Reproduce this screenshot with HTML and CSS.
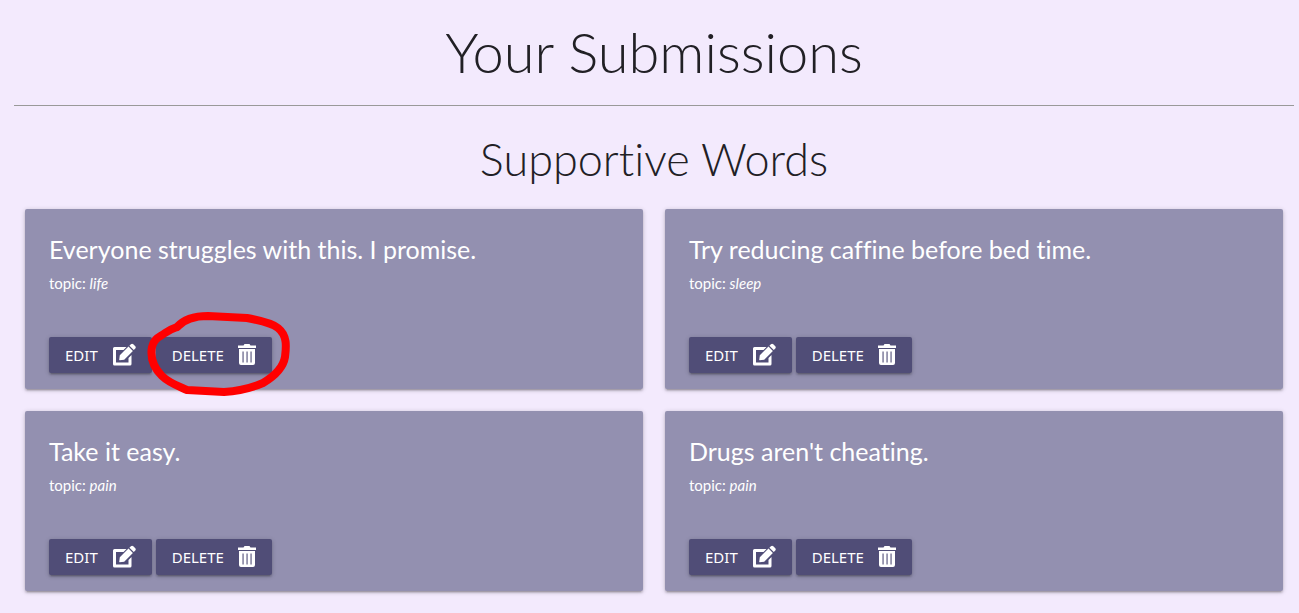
FILE: index.html
```html
<!DOCTYPE html>
<html lang="en">
<head>
<meta charset="utf-8">
<meta name="viewport" content="width=device-width, initial-scale=1">
<title>Your Submissions</title>
<link rel="stylesheet" href="styles.css">
</head>
<body>
<svg class="sprite" aria-hidden="true">
  <symbol id="edit" viewBox="0 0 24 24">
    <path fill-rule="evenodd" d="M2.500 4H14.500L11.500 7H4V19.500H16.500V15L19.500 12V21Q19.500 22.500 18 22.500H2.500Q1 22.500 1 21V5.500Q1 4 2.500 4Z"/>
    <path d="M7.200 16.800L7.800 12.300L16.500 3.600L20.900 8L12.200 16.700L7.600 17.300ZM17.400 2.700L18.900 1.200Q20.100.3 21.300 1.200L23.300 3.200Q24.200 4.400 23.300 5.600L21.800 7.100Z"/>
  </symbol>
  <symbol id="trash" viewBox="3 0 18 24">
    <path d="M3 2.500H8.500L9.500 1H14.500L15.500 2.500H21V5H3Z"/>
    <path fill-rule="evenodd" d="M4 6H20V20Q20 22 18 22H6Q4 22 4 20ZM7.500 8.500V19.500H8.600V8.500ZM11.500 8.500V19.500H12.600V8.500ZM15.500 8.500V19.500H16.600V8.500Z"/>
  </symbol>
</svg>
<main class="page">
  <h1 class="page-title">Your Submissions</h1>
  <hr class="divider">
  <h2 class="section-title">Supportive Words</h2>
  <section class="cards">
    <article class="card">
      <h3 class="card-title">Everyone struggles with this. I promise.</h3>
      <p class="topic">topic: <em>life</em></p>
      <div class="actions">
        <button class="btn" type="button">EDIT<svg class="icon" aria-hidden="true"><use href="#edit"/></svg></button>
        <div class="marked">
          <button class="btn" type="button">DELETE<svg class="icon icon-trash" aria-hidden="true"><use href="#trash"/></svg></button>
          <svg class="scribble" viewBox="146 310 146 88" aria-hidden="true"><path d="M177 327C185 318 197 316 208 316L247 318C258 320 272 323 278 328C288 336 286 348 285 357C283 369 273 377 263 383C249 389 238 391 224 392L187 390C178 386 169 383 162 376C153 367 150 358 152 347C154 338 160 337 165 333Q171 329 177 327"/></svg>
        </div>
      </div>
    </article>
    <article class="card">
      <h3 class="card-title">Try reducing caffine before bed time.</h3>
      <p class="topic">topic: <em>sleep</em></p>
      <div class="actions">
        <button class="btn" type="button">EDIT<svg class="icon" aria-hidden="true"><use href="#edit"/></svg></button>
        <button class="btn" type="button">DELETE<svg class="icon icon-trash" aria-hidden="true"><use href="#trash"/></svg></button>
      </div>
    </article>
    <article class="card">
      <h3 class="card-title">Take it easy.</h3>
      <p class="topic">topic: <em>pain</em></p>
      <div class="actions">
        <button class="btn" type="button">EDIT<svg class="icon" aria-hidden="true"><use href="#edit"/></svg></button>
        <button class="btn" type="button">DELETE<svg class="icon icon-trash" aria-hidden="true"><use href="#trash"/></svg></button>
      </div>
    </article>
    <article class="card">
      <h3 class="card-title">Drugs aren't cheating.</h3>
      <p class="topic">topic: <em>pain</em></p>
      <div class="actions">
        <button class="btn" type="button">EDIT<svg class="icon" aria-hidden="true"><use href="#edit"/></svg></button>
        <button class="btn" type="button">DELETE<svg class="icon icon-trash" aria-hidden="true"><use href="#trash"/></svg></button>
      </div>
    </article>
  </section>
</main>
</body>
</html>
```
FILE: styles.css
```css
* {
  box-sizing: border-box;
}

body {
  margin: 0;
  background: #f3eafd;
  color: #212025;
  font-family: Lato, "Open Sans", sans-serif;
  font-variant-ligatures: none;
}

.sprite {
  display: none;
}

.page {
  padding: 18px 5px 22px 14px;
}

.page-title,
.section-title {
  margin: 0;
  font-weight: 300;
  text-align: center;
}

.page-title {
  font-size: 56px;
  line-height: 68px;
}

.divider {
  margin: 19px 0 23px;
  border: 0;
  border-top: 1px solid #999;
}

.section-title {
  font-size: 45px;
  line-height: 60px;
}

.cards {
  display: grid;
  grid-template-columns: 1fr 1fr;
  gap: 22px;
  padding: 20px 11px 0;
}

.card {
  padding: 24px 24px 16px;
  border-radius: 2px;
  background: #9390b0;
  color: #fff;
  box-shadow: 0 2px 2px rgba(0, 0, 0, .14), 0 3px 1px -2px rgba(0, 0, 0, .12), 0 1px 5px rgba(0, 0, 0, .2);
}

.card-title {
  margin: 0 0 8px;
  font-size: 25px;
  font-weight: 400;
  line-height: 32px;
}

.topic {
  margin: 0 0 44px;
  font-size: 15px;
  line-height: 20px;
}

.actions {
  display: flex;
  gap: 4px;
}

.btn {
  display: flex;
  align-items: center;
  gap: 14px;
  height: 36px;
  padding: 0 16px;
  border: 0;
  border-radius: 2px;
  background: #504d77;
  color: #fff;
  font: 400 15px/36px "Noto Sans", sans-serif;
  box-shadow: 0 2px 2px rgba(0, 0, 0, .14), 0 3px 1px -2px rgba(0, 0, 0, .12), 0 1px 5px rgba(0, 0, 0, .2);
  cursor: pointer;
}

.icon {
  width: 24px;
  height: 24px;
  fill: currentColor;
}

.icon-trash {
  width: 18px;
}

.marked {
  position: relative;
}

.scribble {
  position: absolute;
  top: -27px;
  left: -10px;
  width: 146px;
  height: 88px;
  fill: none;
  stroke: #f00;
  stroke-width: 8px;
  stroke-linecap: round;
  stroke-linejoin: round;
  pointer-events: none;
}
```
